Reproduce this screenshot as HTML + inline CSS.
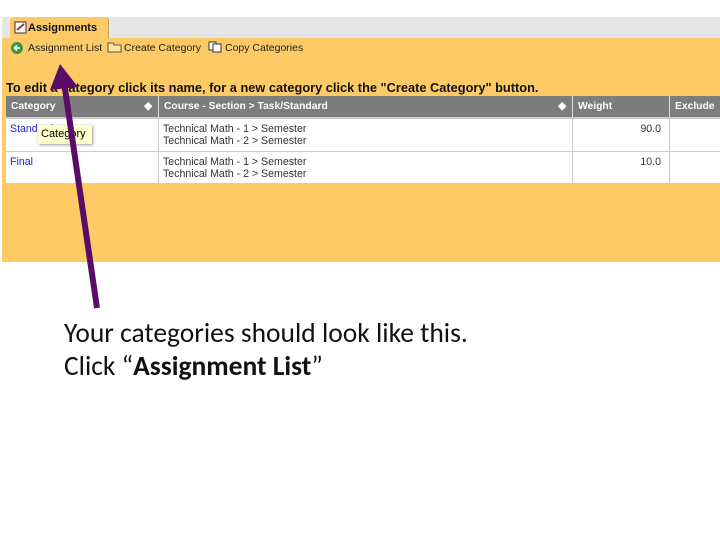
<!DOCTYPE html>
<html><head><meta charset="utf-8"><style>
body{margin:0;width:720px;height:540px;background:#fff;position:relative;overflow:hidden;font-family:"Liberation Sans",sans-serif}
.a{position:absolute}
.strip{left:2px;top:17px;width:718px;height:21px;background:#e6e6e6}
.org{left:2px;top:38px;width:718px;height:224px;background:#fdca66}
.tab{left:10px;top:17px;width:98px;height:22px;background:#fdca66;border-radius:3px 3px 0 0;border-right:1px solid #c9a050}
.tab span{position:absolute;left:18px;top:5px;font-size:11px;font-weight:bold;color:#111}
.nav{top:42px;font-size:10.5px;color:#222}
.hd{left:6px;top:96px;width:714px;height:21px;background:#7d7d7d}
.hd div,.r div{position:absolute;top:0;height:100%;box-sizing:border-box}
.hd div{color:#fff;font-size:10.3px;font-weight:bold;padding:5px 0 0 5px;border-left:1px solid #ddd}
.r{left:6px;width:714px;background:#fff;font-size:10.6px;color:#333}
.r div{border-left:1px solid #ccc;padding:4px 0 0 4px;line-height:12px}
</style></head><body>
<div class="a strip"></div>
<div class="a org"></div>
<div class="a tab"><svg class="a" style="left:4px;top:4px" width="13" height="13"><rect x="1" y="1" width="11" height="11" fill="#fff" stroke="#333"/><path d="M3 9 L10 3" stroke="#a33" stroke-width="2"/></svg><span>Assignments</span></div>
<svg class="a" style="left:11px;top:42px" width="12" height="12"><circle cx="6" cy="6" r="6" fill="#3a9a3a"/><path d="M9 6H4M6 3.5L3.5 6 6 8.5" stroke="#fff" stroke-width="1.6" fill="none"/></svg>
<div class="a nav" style="left:28px">Assignment List</div>
<svg class="a" style="left:107px;top:41px" width="15" height="12"><path d="M1 2h5l1 2h7v7H1z" fill="#fbe89a" stroke="#555"/></svg>
<div class="a nav" style="left:124px">Create Category</div>
<svg class="a" style="left:208px;top:41px" width="14" height="12"><rect x="1" y="1" width="7" height="8" fill="#fff" stroke="#333"/><rect x="5" y="3" width="8" height="8" fill="#fff" stroke="#333"/></svg>
<div class="a nav" style="left:225px">Copy Categories</div>
<div class="a" style="left:6px;top:80px;font-size:12.8px;font-weight:bold;color:#111">To edit a category click its name, for a new category click the "Create Category" button.</div>
<div class="a hd">
<div style="left:0;width:152px;border:none">Category<span style="position:absolute;right:6px;top:4px">◆</span></div>
<div style="left:152px;width:414px">Course - Section &gt; Task/Standard<span style="position:absolute;right:6px;top:4px">◆</span></div>
<div style="left:566px;width:97px">Weight</div>
<div style="left:663px;width:60px">Exclude</div>
</div>
<div class="a" style="left:6px;top:117px;width:714px;height:2px;background:#ccc"></div>
<div class="a r" style="top:119px;height:32px">
<div style="left:0;width:152px;border:none;color:#22c">Standard</div>
<div style="left:152px;width:414px;padding-top:4px">Technical Math - 1 &gt; Semester<br>Technical Math - 2 &gt; Semester</div>
<div style="left:566px;width:97px;text-align:right;padding-right:8px">90.0</div>
<div style="left:663px;width:60px"></div>
</div>
<div class="a" style="left:6px;top:151px;width:714px;height:1px;background:#ccc"></div>
<div class="a r" style="top:152px;height:31px">
<div style="left:0;width:152px;border:none;color:#22c">Final</div>
<div style="left:152px;width:414px">Technical Math - 1 &gt; Semester<br>Technical Math - 2 &gt; Semester</div>
<div style="left:566px;width:97px;text-align:right;padding-right:8px">10.0</div>
<div style="left:663px;width:60px"></div>
</div>
<div class="a" style="left:38px;top:125px;width:54px;height:19px;background:#ffffcc;box-shadow:1px 1px 3px #999;font-size:11px;padding:3px 0 0 3px;box-sizing:border-box">Category</div>
<svg class="a" style="left:0;top:0" width="720" height="540"><path d="M97 308 L64 82" stroke="#5a0d68" stroke-width="6"/><path d="M60 64 L50 90 L78 87 Z" fill="#5a0d68"/></svg>
<div class="a" style="left:64px;top:317px;font-size:27.5px;line-height:33px;color:#111;font-family:'Carlito','Liberation Sans',sans-serif">Your categories should look like this.<br>Click “<b>Assignment List</b>”</div>
</body></html>
